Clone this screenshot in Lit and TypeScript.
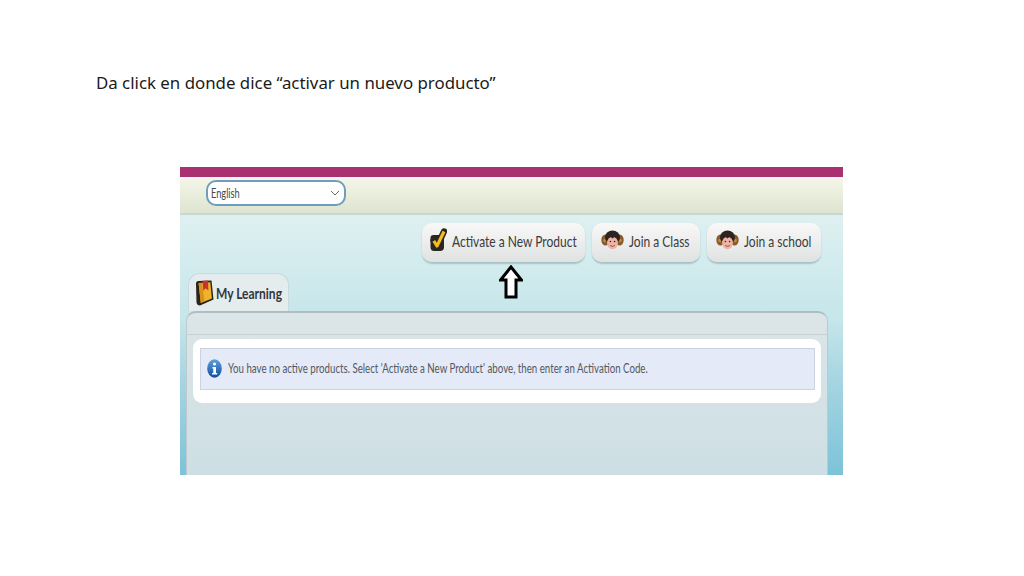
import { LitElement, html, css, svg } from "lit";
import { customElement } from "lit/decorators.js";

const monkey = svg`<svg width="23" height="20" viewBox="0 0 23 20">
  <ellipse cx="4.5" cy="10" rx="4.2" ry="5.5" fill="#8a5a2a"/>
  <ellipse cx="18.5" cy="10" rx="4.2" ry="5.5" fill="#8a5a2a"/>
  <circle cx="4" cy="10.5" r="1.8" fill="#c58a3e"/>
  <circle cx="19" cy="10.5" r="1.8" fill="#c58a3e"/>
  <ellipse cx="11.5" cy="7.5" rx="7.5" ry="7" fill="#2c2420"/>
  <ellipse cx="11.5" cy="13" rx="5.4" ry="6.2" fill="#efb3a6"/>
  <path d="M6 9.5 L8.5 6 L11.5 8.5 L14.5 6 L17 9.5 L17 5 L6 5Z" fill="#2c2420"/>
  <circle cx="9.4" cy="11.5" r=".8" fill="#222"/><circle cx="13.6" cy="11.5" r=".8" fill="#222"/>
  <path d="M9.2 15.5 Q11.5 17.3 13.8 15.5" stroke="#7a3b30" stroke-width=".8" fill="none"/>
</svg>`;

const check = svg`<svg width="17" height="24" viewBox="0 0 17 24">
  <path d="M3.5 7 Q0.5 7 0.5 10 L0.5 19 Q0.5 23 4 23 L10 23 Q14 23 14 19 L14 10 Q14 7 11 7Z" fill="#2b2622"/>
  <path d="M3.6 12.5 L7 18.5 L14 3.5" stroke="#2b2622" stroke-width="6.4" fill="none" stroke-linecap="round" stroke-linejoin="round"/>
  <path d="M3.8 12.8 L7 18 L14 3.5" stroke="#f4bb1e" stroke-width="3.2" fill="none" stroke-linejoin="round"/>
</svg>`;

const book = svg`<svg width="19" height="26" viewBox="0 0 19 26">
  <path d="M1 3.5 Q1 1 3.5 1 L16.5 .5 L18.5 19.5 L5 25.5 Q2 25.5 1.5 22.5Z" fill="#2b2318"/>
  <path d="M3.6 3 L15.3 2.3 L16.9 18.6 L5.8 23Z" fill="#f0b42a"/>
  <path d="M7 3 L9.5 21 L5.8 23 L3.6 3Z" fill="#d9921c"/>
  <path d="M7.5 .8 L13 .5 L13.4 10.5 L10.6 8.3 L8.4 10.8Z" fill="#c4342c"/>
</svg>`;

const info = svg`<svg width="15" height="19" viewBox="0 0 15 19">
  <defs><linearGradient id="ig" x1="0" y1="0" x2="0" y2="1"><stop offset="0" stop-color="#5f9fdc"/><stop offset="1" stop-color="#0f4f9e"/></linearGradient></defs>
  <ellipse cx="7.5" cy="9.5" rx="7.3" ry="9.2" fill="url(#ig)"/>
  <circle cx="7.5" cy="5" r="1.6" fill="#fff"/>
  <path d="M5.5 8 H9 V14 H10.3 V15.5 H5 V14 H6.3 V9.5 H5.5Z" fill="#fff"/>
</svg>`;

@customElement("app-root")
export class AppRoot extends LitElement {
  static styles = css`
    :host {
      display: block;
      width: 1024px;
      height: 576px;
      background: #fff;
      overflow: hidden;
      font-family: "Lato", "Liberation Sans", sans-serif;
    }
    svg { flex: none; display: block; }
    .slide { display: flex; flex-direction: column; height: 100%; }
    .title {
      margin: 71px 0 0 96px;
      height: 96px;
      font: 16.85px/23px "Noto Sans", "Open Sans", sans-serif;
      color: #1a1a1a;
    }
    .shot {
      position: relative;
      margin-left: 180px;
      width: 663px;
      height: 308px;
      display: flex;
      flex-direction: column;
      overflow: hidden;
    }
    .stripe { height: 10px; background: #a93071; flex: none; }
    .head {
      height: 38px;
      flex: none;
      box-sizing: border-box;
      padding: 3px 0 0 26px;
      background: linear-gradient(#f5f6ea, #dde4cf);
      border-bottom: 2px solid #c5d8d6;
    }
    .select {
      width: 140px;
      height: 26px;
      box-sizing: border-box;
      border: 2px solid #6e9dbd;
      border-radius: 10px;
      background: #fff;
      display: flex;
      align-items: center;
      justify-content: space-between;
      padding: 0 4px 0 3px;
      font-size: 12.5px;
      color: #4a4a4a;
    }
    .cond {
      display: inline-block;
      flex: none;
      white-space: nowrap;
      transform-origin: 0 50%;
    }
    .select .cond { transform: scaleX(.74); }
    .body {
      flex: 1;
      display: flex;
      flex-direction: column;
      background: linear-gradient(#dff0f1 0%, #c5e6ea 40%, #a8d6e2 62%, #7cc3d9 100%);
    }
    .actions {
      display: flex;
      justify-content: flex-end;
      gap: 7px;
      padding: 8px 22px 0 0;
      height: 50px;
      flex: none;
      box-sizing: border-box;
      margin-bottom: 8px;
    }
    .btn {
      height: 39px;
      box-sizing: border-box;
      border-radius: 10px;
      background: linear-gradient(#f8f8f7, #e0e2e2);
      box-shadow: 0 1.5px 1.5px #a9c2c6;
      display: flex;
      align-items: center;
      gap: 5px;
      padding: 0 0 5px 8px;
      font-size: 16px;
      color: #3b3b3b;
    }
    .btn .cond { transform: scaleX(.75); }
    .btn.a { width: 163px; }
    .btn.b { width: 108px; padding-left: 9px; }
    .btn.c { width: 114px; padding-left: 9px; }
    .tab {
      margin-left: 8px;
      width: 101px;
      height: 38px;
      box-sizing: border-box;
      flex: none;
      border-radius: 12px 12px 0 0;
      background: #e4ecee;
      border: 1px solid #c8dadd;
      border-bottom: 0;
      display: flex;
      align-items: center;
      gap: 2px;
      padding-left: 6px;
      font-size: 15px;
      font-weight: 700;
      color: #33363a;
    }
    .tab .cond { transform: scaleX(.8); }
    .panel {
      flex: 1;
      margin: 0 15px 0 6px;
      box-sizing: border-box;
      border-radius: 10px 10px 0 0;
      border: 1px solid #bccacd;
      border-top: 2px solid #aebdc1;
      border-bottom: 0;
      background: linear-gradient(#dce5e7, #cddfe4);
      padding: 21px 6px 0 6px;
      display: flex;
      flex-direction: column;
    }
    .rule { height: 1px; background: #c8d2d5; flex: none; margin: 0 -6px 4px; }
    .card {
      height: 64px;
      box-sizing: border-box;
      background: #fff;
      border-radius: 9px;
      padding: 9px 6px 0 7px;
      flex: none;
    }
    .notice {
      height: 42px;
      box-sizing: border-box;
      background: #e4eaf7;
      border: 1px solid #ccd3e0;
      display: flex;
      align-items: center;
      gap: 6px;
      padding: 0 0 2px 6px;
      font-size: 12.5px;
      color: #55595e;
    }
    .notice .cond { transform: scaleX(.776); }
    .arrow { position: absolute; left: 319px; top: 98px; }
  `;

  render() {
    return html`<div class="slide">
      <div class="title">Da click en donde dice “activar un nuevo producto”</div>
      <div class="shot">
        <div class="stripe"></div>
        <div class="head">
          <div class="select">
            <span class="cond">English</span>
            <svg width="10" height="6" viewBox="0 0 10 6"><path d="M1 1 L5 5 L9 1" stroke="#666" fill="none"/></svg>
          </div>
        </div>
        <div class="body">
          <div class="actions">
            <div class="btn a">${check}<span class="cond">Activate a New Product</span></div>
            <div class="btn b">${monkey}<span class="cond">Join a Class</span></div>
            <div class="btn c">${monkey}<span class="cond">Join a school</span></div>
          </div>
          <div class="tab">${book}<span class="cond">My Learning</span></div>
          <div class="panel">
            <div class="rule"></div>
            <div class="card">
              <div class="notice">${info}<span class="cond">You have no active products. Select 'Activate a New Product' above, then enter an Activation Code.</span></div>
            </div>
          </div>
        </div>
        <svg class="arrow" width="24" height="35" viewBox="0 0 24 35">
          <path d="M12 2 L22.5 15 H17 V32 H7 V15 H1.5Z" fill="#fff" stroke="#000" stroke-width="3" stroke-linejoin="miter"/>
        </svg>
      </div>
    </div>`;
  }
}
